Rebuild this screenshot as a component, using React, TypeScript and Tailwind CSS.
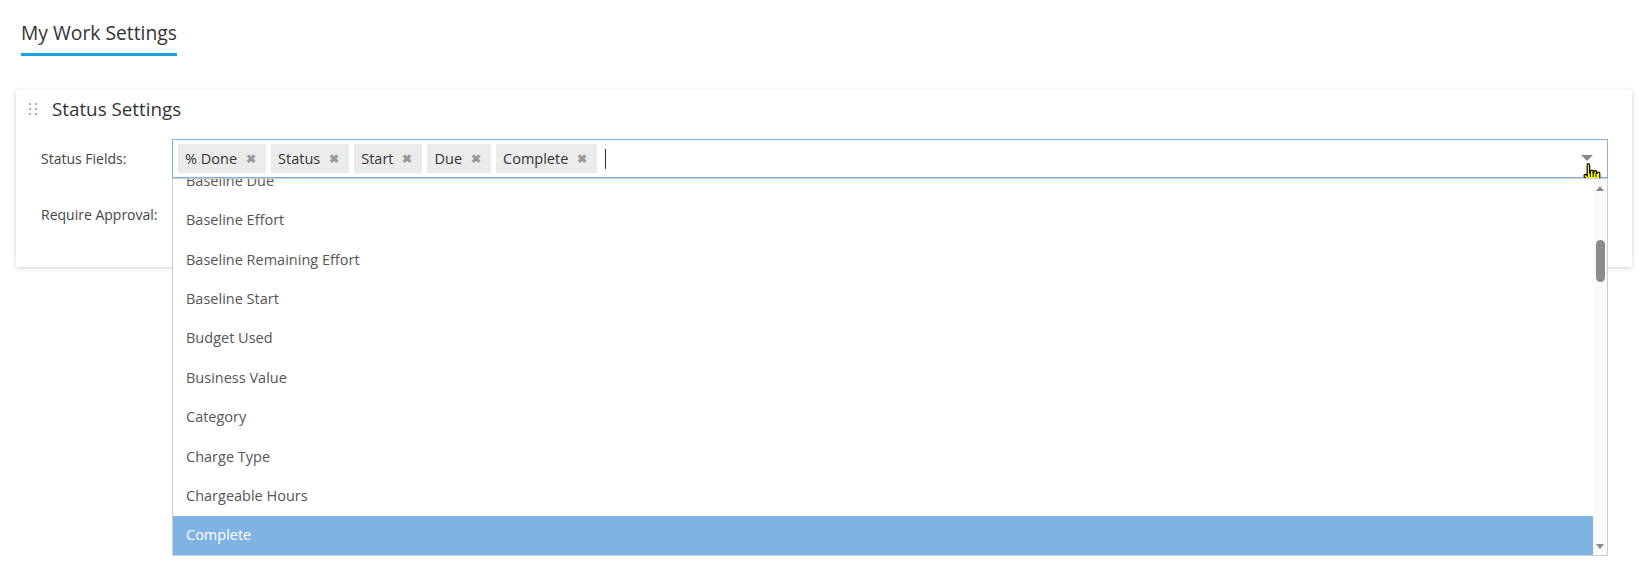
import { useState } from "react";

const selected = ["% Done", "Status", "Start", "Due", "Complete"];

const options = [
  "Baseline Due",
  "Baseline Effort",
  "Baseline Remaining Effort",
  "Baseline Start",
  "Budget Used",
  "Business Value",
  "Category",
  "Charge Type",
  "Chargeable Hours",
  "Complete",
];

function DragHandle() {
  return (
    <svg width="10" height="14" viewBox="0 0 10 14" className="fill-[#aaa]">
      {[1, 6, 11].map((y) =>
        [2, 8].map((x) => <rect key={`${x}-${y}`} x={x - 1} y={y} width="2" height="2" />)
      )}
    </svg>
  );
}

function HandCursor() {
  // pointing hand, as drawn by the OS over the arrow
  return (
    <svg width="20" height="24" viewBox="0 0 20 24" className="pointer-events-none">
      <path
        d="M5 1.5c1 0 1.6.7 1.6 1.6V11l.8-.1V9.4c0-.8.6-1.3 1.4-1.3s1.4.5 1.4 1.3v1.6l.6-.1v-.9c0-.8.6-1.3 1.4-1.3s1.4.5 1.4 1.3v1.3l.5-.1c0-.7.6-1.2 1.3-1.2s1.4.5 1.4 1.3v5.3c0 3.2-2.2 5.8-5.5 5.8H10c-2 0-3.2-.8-4.3-2.2L1.3 14.6c-.5-.7-.3-1.5.3-1.9.6-.4 1.4-.3 1.9.3l.7.9V3.1c0-.9.7-1.6 1.6-1.6z"
        fill="#ffff00"
        stroke="#000"
        strokeWidth="1.2"
      />
      <path d="M7.4 11v4M10.2 11v4M13 11v4" stroke="#000" strokeWidth="1" />
    </svg>
  );
}

export default function App() {
  const [tags] = useState(selected);

  return (
    <div className="min-h-[578px] bg-white font-['Open_Sans','Noto_Sans',sans-serif] text-[#333]">
      {/* Page tab */}
      <div className="px-[21px] pt-[20px]">
        <div className="inline-block border-b-[3px] border-[#1ba1e2] pb-[8px] text-[19.3px] leading-[25px] text-[#333]">
          My Work Settings
        </div>
      </div>

      {/* Settings card */}
      <div className="relative mx-[17px] ml-[16px] mt-[34px] h-[177px] rounded-[2px] bg-white shadow-[0_1px_5px_rgba(0,0,0,0.18)]">
        <div className="flex items-center gap-[14px] pl-[12px] pt-[7px]">
          <DragHandle />
          <span className="text-[18.8px] leading-[24px] text-[#333]">Status Settings</span>
        </div>

        <div className="mt-[18px] flex items-center">
          <div className="w-[156px] pl-[25px] text-[14px] text-[#444]">Status Fields:</div>
          <div className="relative mr-[24px] flex h-[39px] flex-1 items-center gap-[5px] border border-[#7fb2e0] pl-[5px]">
            {tags.map((t) => (
              <span
                key={t}
                className="flex h-[29px] items-center gap-[9px] bg-[#ebebeb] pl-[7px] pr-[10px] text-[14.5px] text-[#333]"
              >
                {t}
                <span className="text-[12px] font-bold text-[#999]">✖</span>
              </span>
            ))}
            <span className="ml-[3px] h-[20px] w-px bg-[#333]" />
            <span className="absolute right-[14px] top-[15px] h-0 w-0 border-x-[6px] border-t-[6px] border-x-transparent border-t-[#888]" />
            <span className="absolute right-[4px] top-[22px]">
              <HandCursor />
            </span>

            {/* Open option list */}
            <div className="absolute left-[-1px] right-[-1px] top-[38px] z-10 flex h-[378px] border border-[#ccc] bg-white">
              <div className="flex-1 overflow-hidden">
                <div className="mt-[-18px]">
                  {options.map((o) => (
                    <div
                      key={o}
                      className={
                        o === "Complete"
                          ? "flex h-[39.4px] items-center bg-[#7fb3e3] pl-[13px] text-[14.5px] text-white"
                          : "flex h-[39.4px] items-center pl-[13px] text-[14.5px] text-[#555]"
                      }
                    >
                      {o}
                    </div>
                  ))}
                </div>
              </div>
              <div className="relative w-[14px] bg-[#fafafa]">
                <span className="absolute left-[3px] top-[7px] h-0 w-0 border-x-[4px] border-b-[5px] border-x-transparent border-b-[#888]" />
                <span className="absolute left-[3px] top-[61px] h-[42px] w-[9px] rounded-full bg-[#8c8c8c]" />
                <span className="absolute bottom-[6px] left-[3px] h-0 w-0 border-x-[4px] border-t-[5px] border-x-transparent border-t-[#888]" />
              </div>
            </div>
          </div>
        </div>

        <div className="mt-[26px] flex items-center">
          <div className="w-[156px] pl-[25px] text-[14px] text-[#444]">Require Approval:</div>
        </div>
      </div>
    </div>
  );
}
